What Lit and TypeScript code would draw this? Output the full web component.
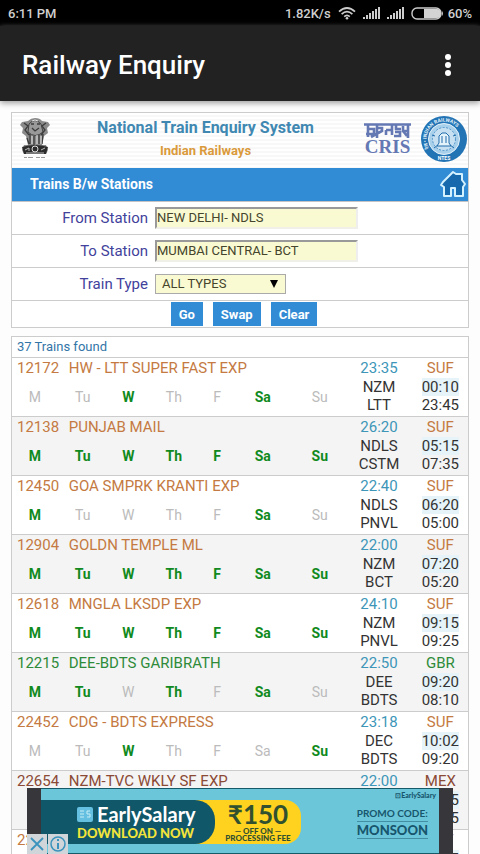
import { LitElement, html, css, svg } from "lit";
import { customElement } from "lit/decorators.js";
import { classMap } from "lit/directives/class-map.js";

interface Train {
  no: string;
  name: string;
  kind: "suf" | "gbr" | "mex";
  runs: string;
  duration: string;
  from: string;
  to: string;
  dep: string;
  arr: string;
}

const DAYS = ["M", "Tu", "W", "Th", "F", "Sa", "Su"];

const t = (
  no: string, name: string, kind: Train["kind"], runs: string, duration: string,
  from: string, to: string, dep: string, arr: string
): Train => ({ no, name, kind, runs, duration, from, to, dep, arr });

// runs: one character per weekday from Monday, 1 when the train operates
const TRAINS: Train[] = [
  t("12172", "HW - LTT SUPER FAST EXP", "suf", "0010010", "23:35", "NZM", "LTT", "00:10", "23:45"),
  t("12138", "PUNJAB MAIL", "suf", "1111111", "26:20", "NDLS", "CSTM", "05:15", "07:35"),
  t("12450", "GOA SMPRK KRANTI EXP", "suf", "1000010", "22:40", "NDLS", "PNVL", "06:20", "05:00"),
  t("12904", "GOLDN TEMPLE ML", "suf", "1111111", "22:00", "NZM", "BCT", "07:20", "05:20"),
  t("12618", "MNGLA LKSDP EXP", "suf", "1111111", "24:10", "NZM", "PNVL", "09:15", "09:25"),
  t("12215", "DEE-BDTS GARIBRATH", "gbr", "1101010", "22:50", "DEE", "BDTS", "09:20", "08:10"),
  t("22452", "CDG - BDTS EXPRESS", "suf", "0010001", "23:18", "DEC", "BDTS", "10:02", "09:20"),
  t("22654", "NZM-TVC WKLY SF EXP", "mex", "1000000", "22:00", "NZM", "PNVL", "05:15", "03:15"),
  t("22634", "NZM-TVC SF EXP", "suf", "0010000", "22:00", "NZM", "PNVL", "05:15", "03:15"),
];

const signal = () => html`<svg width="17" height="12" viewBox="0 0 17 12" aria-hidden="true">
  ${[0, 1, 2, 3, 4, 5].map((i) => svg`<rect x=${i * 3} y=${10 - i * 2} width="2" height=${2 + i * 2} fill="#ccc" />`)}
</svg>`;

@customElement("status-bar")
class StatusBar extends LitElement {
  static styles = css`
    :host { display: flex; align-items: center; gap: 7px; height: 26px; padding: 0 8px; background: #000; color: #d0d0d0; font-size: 13px; font-weight: 500; flex: none; }
    .rate { margin-left: auto; }
    .battery { display: flex; align-items: center; gap: 4px; }
    svg { display: block; }
  `;
  render() {
    return html`<span>6:11 PM</span><span class="rate">1.82K/s</span>
      <svg width="18" height="13" viewBox="0 0 18 13" fill="none" stroke="#ccc" stroke-width="1.7" aria-hidden="true">
        <path d="M1 4.6Q9-2.6 17 4.6M3.6 7.2Q9 2.2 14.4 7.2M6.2 9.7Q9 7.2 11.8 9.7" />
        <circle cx="9" cy="11.3" r="1.3" fill="#ccc" stroke="none" />
      </svg>
      ${signal()}${signal()}
      <span class="battery">
        <svg width="33" height="13" viewBox="0 0 33 13" aria-hidden="true">
          <rect x="1" y="1" width="29" height="11" rx="5" fill="none" stroke="#ccc" stroke-width="1.4" />
          <path d="M13 2H26Q30 2 30 6.5T26 11H13Z" fill="#d4d4d4" /><path d="M31 4v5q2-2.500 0-5" fill="#ccc" />
        </svg>60%</span>`;
  }
}

@customElement("site-banner")
class SiteBanner extends LitElement {
  static styles = css`
    :host { display: grid; grid-template-columns: 46px 1fr 49px 48px; align-items: center; box-sizing: border-box; height: 55px; padding-bottom: 4px; background: repeating-linear-gradient(#fff 0 2px, #f8f8f8 2px 4px); }
    .names { text-align: center; padding-right: 18px; }
    h1 { margin: 0; color: #4088b2; font-size: 16px; line-height: 24px; font-weight: 700; white-space: nowrap; }
    p { margin: 0; color: #da9a3b; font-size: 13px; line-height: 22px; font-weight: 700; }
    svg { display: block; margin: auto; }
    .cris { margin: 0 8px 0 -8px; width: 49px; text-align: center; color: #6478b4; font: bold 19px/16px "Liberation Serif", serif; }
    .seal { font: bold 5px Roboto, sans-serif; }
  `;
  render() {
    return html`
      <svg width="30" height="42" viewBox="0 0 30 42" aria-label="State emblem">
        <path d="M8 3Q11 0 15 0Q20 0 22 3L28 4 30 7 27 10 28 15 24 18 22 27H26L28 32 26 36H4L2 32 4 27H8L6 18 2 15 3 10 0 7 2 4Z" fill="#8a8a8a" />
        <path d="M9 6Q15-1 21 6L23 14Q15 21 8 14Z" fill="#999" stroke="#444" />
        <path d="M4 5l4 3-3 4 4 5M26 5l-4 3 3 4-4 5M11 6h3m3 0h3M12 10l3 3 4-3M10 16v10M14 18v9M19 17v9M23 16l-1 10M7 20l2 6" fill="none" stroke="#3c3c3c" stroke-width="1.3" />
        <path d="M12 18v8M17 17v9M21 18v8M12 3l3-1 3 1" fill="none" stroke="#e4e4e4" />
        <path d="M2 29Q15 25 28 29L26 36H4Z" fill="#2c2c2c" />
        <circle cx="15" cy="31" r="3" fill="none" stroke="#ddd" /><path d="M5 32l4-2v3M21 32l4-2M6 35h18" stroke="#bbb" fill="none" />
        <path d="M4 39.500h3m1 0h5m3 0h4m1 0h4" stroke="#999" stroke-width="1" />
      </svg>
      <div class="names"><h1>National Train Enquiry System</h1><p>Indian Railways</p></div>
      <div class="cris">
        <svg width="49" height="17" viewBox="0 0 49 17" fill="none" stroke="#6478b4" stroke-width="2.600" aria-hidden="true">
          <path d="M1 2.500H48M5 3V15M5 7H11V12H3M14 3V16M8 15L19 9V6H14M23 8H29V13M29 3V9M23 8V13M33 3V7H38M32 10H37V14H31M45 3V16M40 4V9H45M40 9L44 14" />
        </svg>CRIS
      </div>
      <svg class="seal" width="48" height="48" viewBox="0 0 48 48" aria-label="NTES seal">
        <defs><path id="arc" d="M10 34.500A17.500 17.500 0 1 1 38 34.500" /></defs>
        <circle cx="24" cy="24" r="23" fill="#2374b4" />
        <circle cx="24" cy="24" r="15.500" fill="#a9d0eb" stroke="#e5f2fb" />
        <circle cx="24" cy="24" r="11.500" fill="#c6e0f2" stroke="#4e93c9" stroke-dasharray="2 1.500" />
        <path d="M19 28V21L22 18H26L29 21V28L31 31H17ZM22 21v7m4-7v7M14 33l4-3m16 3l-4-3M12 20l3 1M36 20l-3 1" fill="#e4f2fa" stroke="#216dab" />
        <text fill="#e2f2fc"><textPath href="#arc" startOffset="2">रेल • INDIAN RAILWAYS</textPath></text>
        <text x="24" y="45" text-anchor="middle" fill="#fff">NTES</text>
      </svg>`;
  }
}

@customElement("search-form")
class SearchForm extends LitElement {
  static styles = css`
    :host { display: block; }
    .bar { display: flex; align-items: center; justify-content: space-between; height: 34px; padding: 0 0 2px 18px; background: #328bd5; color: #fff; border-bottom: 1px solid #c4c4c4; box-sizing: border-box; }
    h2 { margin: 0; font-size: 14px; font-weight: 700; }
    .home { display: block; margin-right: 1px; }
    .home svg { display: block; }
    .row { display: grid; grid-template-columns: 136px 1fr; align-items: center; column-gap: 7px; height: 32px; border-bottom: 1px solid #ccc; }
    label { text-align: right; color: #42429c; font-size: 15px; }
    input, select { box-sizing: border-box; margin: 0; border-radius: 0; background: #fafad2; color: #45452d; font: 13px/16px Roboto, sans-serif; }
    input { width: 203px; height: 22px; padding: 0 0 2px; border: 2px solid; border-color: #999 #eee #f0f0e8 #999; }
    .pick { position: relative; width: 131px; }
    select { width: 100%; height: 20px; padding: 0 6px; border: 1px solid #aaa; appearance: none; display: block; }
    .arrow { position: absolute; right: 8px; top: 6px; pointer-events: none; }
    .actions { display: flex; justify-content: center; gap: 10px; padding: 1px 0; margin-left: 8px; }
    button { height: 24px; padding: 0 8px; border: 0; background: #328bd5; color: #fff; font: 700 13px Roboto, sans-serif; }
  `;
  render() {
    return html`
      <div class="bar"><h2>Trains B/w Stations</h2>
        <a class="home" href="#" aria-label="Home"><svg width="28" height="28" viewBox="0 0 28 28">
          <path d="M14 2L17 4H23V10L26 14 24 17V26H16V18H12V26H5V17L2 15 4 12Z" fill="#1769ad" stroke="#d4f1ff" stroke-width="2" stroke-linejoin="round" />
        </svg></a></div>
      <div class="row"><label for="from">From Station</label><input id="from" .value=${"NEW DELHI- NDLS"} /></div>
      <div class="row"><label for="to">To Station</label><input id="to" .value=${"MUMBAI CENTRAL- BCT"} /></div>
      <div class="row"><label for="type">Train Type</label>
        <div class="pick"><select id="type"><option>ALL TYPES</option></select>
          <svg class="arrow" width="8" height="8" viewBox="0 0 8 8" aria-hidden="true"><path d="M0 0H8L4 8Z" /></svg></div></div>
      <div class="actions"><button>Go</button><button>Swap</button><button>Clear</button></div>`;
  }
}

@customElement("train-list")
class TrainList extends LitElement {
  static styles = css`
    :host { display: block; }
    table { width: 100%; border-collapse: collapse; table-layout: fixed; font-size: 14px; text-align: center; }
    caption { height: 20px; padding-left: 5px; color: #3475a8; font-size: 13px; line-height: 20px; text-align: left; }
    td { padding: 0; }
    .train { border-top: 1px solid #ccc; }
    .train:nth-of-type(even) { background: #f4f4f4; }
    .head { height: 20px; font-size: 15px; line-height: 20px; }
    .title { padding-left: 5px; text-align: left; white-space: nowrap; }
    .no { display: inline-block; width: 48px; }
    .suf { color: #c47a42; }
    .gbr { color: #2e8b3a; }
    .mex { color: #8b4a35; }
    .duration { color: #3d96b8; }
    .day { color: #bbb; height: 38px; }
    .on { color: #108a20; font-weight: 700; }
    .ends { color: #333; font-size: 15px; line-height: 18px; vertical-align: top; }
    .right { padding-left: 4px; }
    .dep { background: #e6f4f9; }
    .c8 { width: 8%; } .c9 { width: 9%; } .c10 { width: 10%; } .c11 { width: 11%; } .c12 { width: 12%; } .c13 { width: 13%; }
  `;
  render() {
    return html`<table><caption>37 Trains found</caption>
      <colgroup>${[10, 11, 9, 11, 8, 12, 13, 13, 13].map((w) => html`<col class="c${w}" />`)}</colgroup>
      ${TRAINS.map((r) => html`<tbody class="train">
        <tr class="head">
          <td colspan="7" class="title ${r.kind}"><span class="no">${r.no}</span> ${r.name}</td>
          <td class="duration">${r.duration}</td><td class="right ${r.kind}">${r.kind.toUpperCase()}</td>
        </tr>
        <tr>
          ${DAYS.map((d, i) => html`<td class=${classMap({ day: true, on: r.runs[i] === "1" })}>${d}</td>`)}
          <td class="ends">${r.from}<br />${r.to}</td>
          <td class="ends right"><span class="dep">${r.dep}</span><br />${r.arr}</td>
        </tr></tbody>`)}
    </table>`;
  }
}

@customElement("ad-banner")
class AdBanner extends LitElement {
  static styles = css`
    :host { display: block; box-sizing: border-box; height: 66px; padding: 0 14px; background: #37373b; }
    .ad { display: flex; justify-content: space-between; box-sizing: border-box; height: 100%; border: solid #155a69; border-width: 1px 0; background: #6cc6da; font-family: Lato, sans-serif; }
    .offer { display: flex; height: 44px; margin-top: 11px; border-radius: 0 16px 16px 0; background: #ffd21f; }
    .brand { box-sizing: border-box; width: 174px; padding: 3px 0 0 36px; border-radius: 0 20px 20px 0; background: #10576a; color: #fff; }
    .logo { display: flex; align-items: center; gap: 4px; height: 22px; font: 700 20px/22px Lato, sans-serif; }
    .cta { color: #f3e43b; font: 900 13px/16px Lato, sans-serif; white-space: nowrap; }
    .price { width: 86px; text-align: center; color: #31502f; font: 700 26px/28px Lato, sans-serif; }
    .price small { display: block; font-size: 8px; line-height: 7px; font-weight: 900; white-space: nowrap; }
    .promo { padding-right: 11px; color: #17566d; }
    .small { margin-right: -8px; font: 900 7px/12px Lato, sans-serif; text-align: right; }
    .code { padding-top: 4px; font: 700 10px/16px Lato, sans-serif; white-space: nowrap; }
    .word { border: solid #428fa4; border-width: 1px 0; font: 900 13px/16px Lato, sans-serif; }
    .choices { position: absolute; left: 0; bottom: 0; display: flex; gap: 1px; }
    .choices button { width: 20px; height: 20px; padding: 0; border: 0; background: #cfd5d8; }
    svg { display: block; flex: none; }
  `;
  render() {
    return html`<div class="ad">
        <div class="offer">
          <div class="brand"><div class="logo"><svg width="16" height="15" viewBox="0 0 16 15" aria-hidden="true"><rect width="16" height="15" rx="2" fill="#65bfe0" /><path d="M3 4h4M3 7h4M3 10h4M13 4H10v3h3v3H10" fill="none" stroke="#c7edf6" /></svg>EarlySalary</div>
            <div class="cta">DOWNLOAD NOW</div></div>
          <div class="price">₹150<small>— OFF ON —</small><small>PROCESSING FEE</small></div>
        </div>
        <div class="promo"><div class="small">⊡EarlySalary</div><div class="code">PROMO CODE:</div><div class="word">MONSOON</div></div>
      </div>
      <div class="choices">
        <button aria-label="Close ad"><svg width="20" height="20" viewBox="0 0 20 20"><path d="M4 4L16 16M16 4L4 16" stroke="#3a93bd" stroke-width="1.800" /></svg></button>
        <button aria-label="Ad information"><svg width="20" height="20" viewBox="0 0 20 20" fill="none" stroke="#3a93bd" stroke-width="1.500"><circle cx="10" cy="10" r="7" /><path d="M10 5v2M10 9v6" stroke-width="2" /></svg></button>
      </div>`;
  }
}

@customElement("app-root")
class AppRoot extends LitElement {
  static styles = css`
    :host { position: relative; display: flex; flex-direction: column; height: 100vh; background: #fdfdfd; font-family: Roboto, sans-serif; }
    .appbar { z-index: 1; flex: none; display: flex; align-items: center; justify-content: space-between; box-sizing: border-box; height: 75px; padding: 2px 16px 0 22px; background: #222; color: #fff; box-shadow: 0 2px 6px #999; }
    .appname { font-size: 26px; font-weight: 500; }
    .menu { width: 32px; height: 40px; padding: 0; border: 0; background: none; }
    .menu svg { display: block; margin: auto; }
    main { flex: 1; min-height: 0; overflow-y: auto; scrollbar-width: none; padding: 11px 11px 0; }
    .box { border: 1px solid #ccc; background: #fff; }
    .box + .box { margin-top: 8px; }
    .ad { position: absolute; left: 27px; right: 27px; bottom: 0; }
  `;
  render() {
    return html`<status-bar></status-bar>
      <header class="appbar"><span class="appname">Railway Enquiry</span>
        <button class="menu" aria-label="More options"><svg width="8" height="24" viewBox="0 0 8 24" fill="#fff"><circle cx="4" cy="4" r="3" /><circle cx="4" cy="12" r="3" /><circle cx="4" cy="20" r="3" /></svg></button></header>
      <main>
        <section class="box"><site-banner></site-banner><search-form></search-form></section>
        <section class="box"><train-list></train-list></section>
      </main>
      <ad-banner class="ad"></ad-banner>`;
  }
}
